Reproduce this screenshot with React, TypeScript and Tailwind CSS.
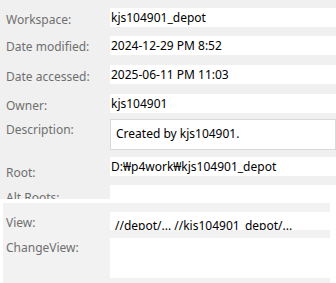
import React from "react"

const font = { fontFamily: '"Noto Sans", "Noto Sans CJK KR", sans-serif' }

function Row({
  label,
  value,
  top,
  height = 19,
  labelPad = 2,
  boxed = false,
}: {
  label: string
  value?: string
  top: number
  height?: number
  labelPad?: number
  boxed?: boolean
}) {
  return (
    <div className="flex items-start" style={{ marginTop: top, height }}>
      <div
        className="w-[110px] shrink-0 pl-[6px] text-[12px] leading-[16px] text-[#6f6f6f] whitespace-nowrap"
        style={{ paddingTop: labelPad, height }}
      >
        {label}
      </div>
      <div
        className={
          "flex-1 bg-white text-[12px] text-black overflow-hidden whitespace-nowrap " +
          (boxed ? "border border-[#d9d9d9] pl-[5px] pt-[6px] leading-[16px]" : "pl-[1px] leading-[19px]")
        }
        style={{ height }}
      >
        {value}
      </div>
    </div>
  )
}

export default function App() {
  return (
    <div className="w-[336px] h-[283px] overflow-hidden bg-white" style={font}>
      <div className="bg-[#f0f0f0] pt-[8px] h-[199px] overflow-hidden">
        <div className="flex flex-col">
          <Row label="Workspace:" value="kjs104901_depot" top={0} labelPad={4} />
          <Row label="Date modified:" value="2024-12-29 PM 8:52" top={9} labelPad={3} />
          <Row label="Date accessed:" value="2025-06-11 PM 11:03" top={10} labelPad={4} />
          <Row label="Owner:" value="kjs104901" top={10} labelPad={4} />
          <Row label="Description:" value="Created by kjs104901." top={6} height={31} labelPad={3} boxed />
          <Row label="Root:" value="D:₩p4work₩kjs104901_depot" top={7} labelPad={8} />
          <Row label="Alt Roots:" top={9} height={30} labelPad={5} />
        </div>
      </div>
      <div className="h-[4px] bg-white" />
      <div className="ml-[3px] w-[327px] h-[80px] bg-[#f2f2f2] pt-[9px]">
        <div className="flex">
          <div className="w-[107px] shrink-0 pl-[3px] pt-[3px] text-[12px] leading-[16px] text-[#6f6f6f]">View:</div>
          <div className="flex-1 h-[18px] bg-white overflow-hidden pl-[5px] pt-[6px] text-[12px] leading-[16px] text-black whitespace-nowrap">
            //depot/... //kjs104901_depot/...
          </div>
        </div>
        <div className="flex mt-[7px]">
          <div className="w-[107px] shrink-0 pl-[3px] pt-[2px] text-[12px] leading-[16px] text-[#6f6f6f]">ChangeView:</div>
          <div className="flex-1 h-[40px] bg-white" />
        </div>
      </div>
    </div>
  )
}
